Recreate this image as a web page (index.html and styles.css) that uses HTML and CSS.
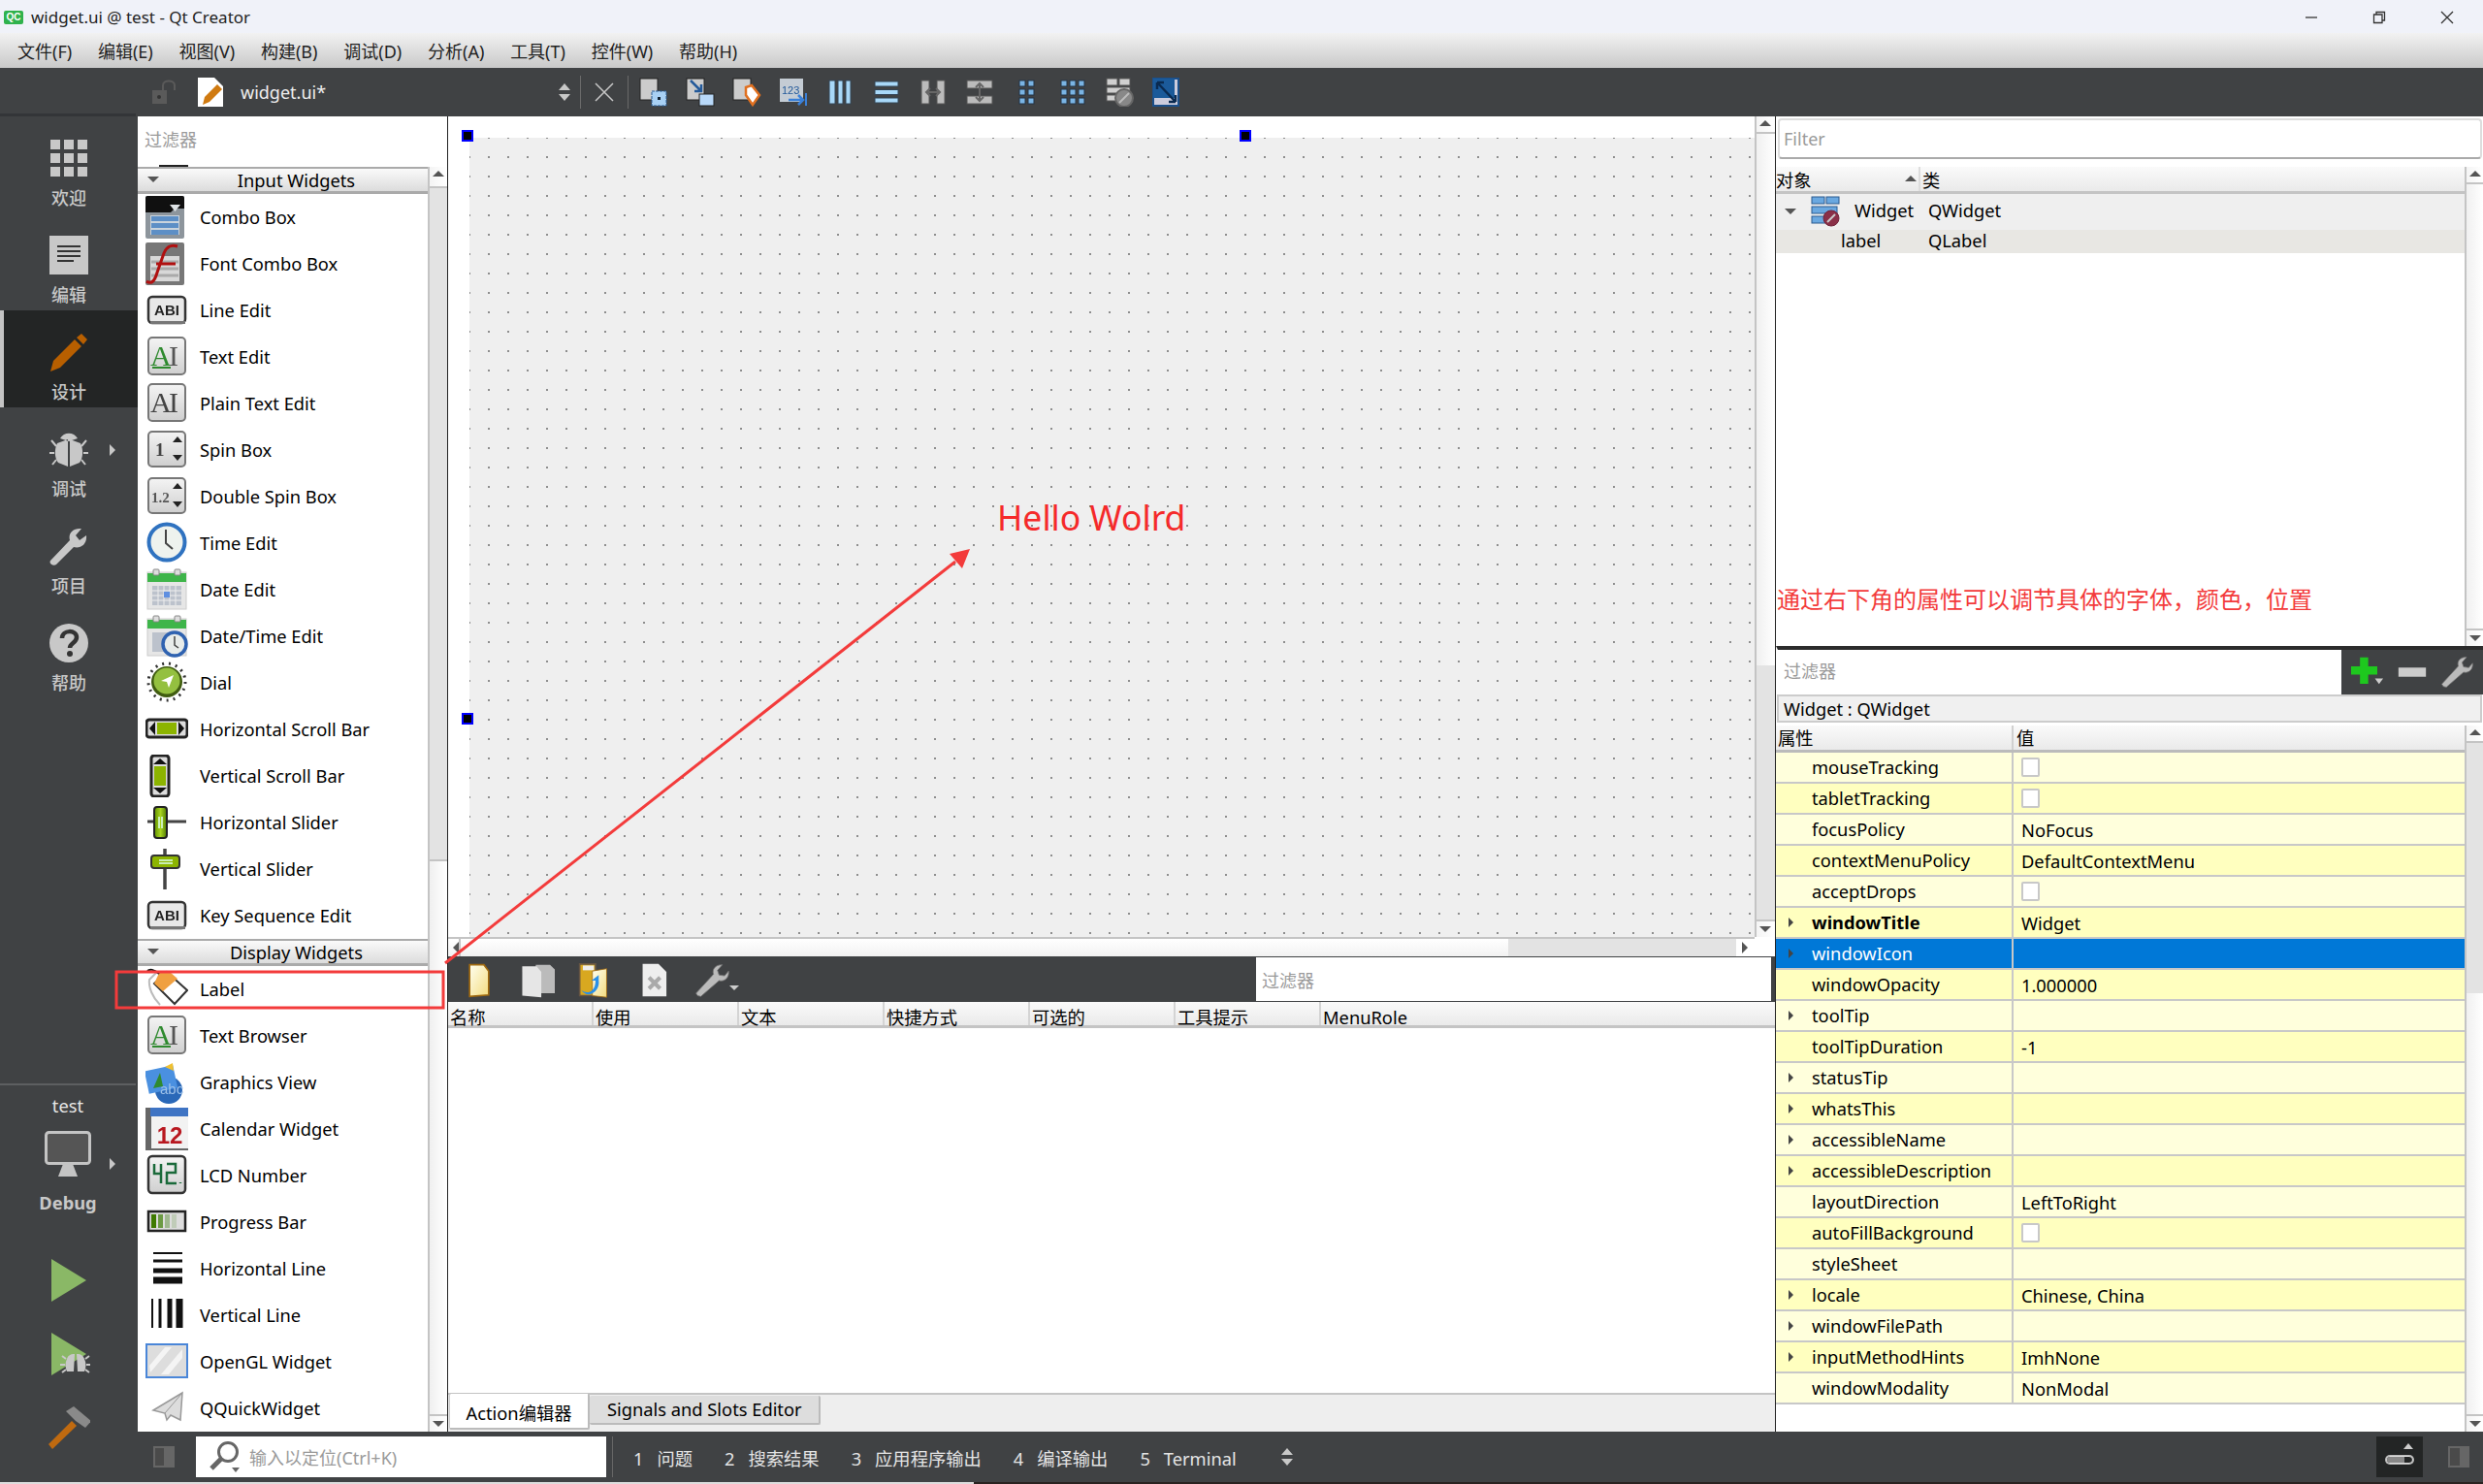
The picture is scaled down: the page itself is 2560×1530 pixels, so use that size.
FILE: index.html
```html
<!DOCTYPE html>
<html lang="zh">
<head>
<meta charset="utf-8">
<title>widget.ui @ test - Qt Creator</title>
<link rel="stylesheet" href="styles.css">
</head>
<body>
<svg class="defs" width="0" height="0">
  <defs>
    <linearGradient id="gbtn" x1="0" y1="0" x2="0" y2="1"><stop offset="0" stop-color="#fafafa"/><stop offset="1" stop-color="#c8c8c8"/></linearGradient>
    <linearGradient id="gcal" x1="0" y1="0" x2="0" y2="1"><stop offset="0" stop-color="#f4f4f4"/><stop offset="1" stop-color="#cfcfcf"/></linearGradient>
    <linearGradient id="ggreen" x1="0" y1="0" x2="1" y2="0"><stop offset="0" stop-color="#5f8f00"/><stop offset=".5" stop-color="#a8d420"/><stop offset="1" stop-color="#4f7a00"/></linearGradient>
    <linearGradient id="gdoc" x1="0" y1="0" x2="1" y2="1"><stop offset="0" stop-color="#fffff0"/><stop offset="1" stop-color="#f3dc80"/></linearGradient>
    <symbol id="i-combo" viewBox="0 0 44 44"><rect x="0" y="0" width="40" height="44" rx="2" fill="#8d959c"/><path d="M0 2q0-2 2-2h36q2 0 2 2v11l-10 0-4 4H0z" fill="#101010"/><path d="M25 9h11l-5.500 7z" fill="#dfe3e6"/><rect x="5" y="20" width="30" height="20" fill="#c9d3dc"/><rect x="6" y="21" width="28" height="5" fill="#5d8fc6"/><rect x="6" y="28" width="28" height="5" fill="#5d8fc6"/><rect x="6" y="35" width="28" height="5" fill="#5d8fc6"/></symbol>
    <symbol id="i-font" viewBox="0 0 44 44"><rect width="40" height="44" rx="2" fill="#777"/><rect x="5" y="14" width="30" height="26" fill="#d8d8d8"/><path d="M6 20h28M6 27h28M6 34h28" stroke="#aaa" stroke-width="3"/><path d="M1 40c6 4 9-2 11-9l7-20c3-7 7-9 14-7M11 22h20" fill="none" stroke="#b01010" stroke-width="3"/></symbol>
    <symbol id="i-line" viewBox="0 0 44 44"><rect x="3" y="8" width="38" height="27" rx="4" fill="#e8e8e8" stroke="#333" stroke-width="2.500"/><rect x="5" y="33" width="36" height="3" fill="#777"/><text x="22" y="27" text-anchor="middle" class="ic-bold" font-size="15">ABI</text></symbol>
    <symbol id="i-text" viewBox="0 0 44 44"><rect x="3" y="2" width="38" height="38" rx="4" fill="url(#gcal)" stroke="#777" stroke-width="2"/><text x="5" y="31" class="ic-serif" font-size="30" fill="#2f8a2f">A</text><text x="24" y="31" class="ic-serif" font-size="30" fill="#555">I</text><rect x="7" y="32" width="19" height="2" fill="#2f8a2f"/></symbol>
    <symbol id="i-plain" viewBox="0 0 44 44"><rect x="3" y="2" width="38" height="38" rx="4" fill="url(#gcal)" stroke="#777" stroke-width="2"/><text x="5" y="31" class="ic-serif" font-size="30" fill="#444">A</text><text x="24" y="31" class="ic-serif" font-size="30" fill="#444">I</text></symbol>
    <symbol id="i-spin" viewBox="0 0 44 44"><rect x="3" y="3" width="38" height="36" rx="4" fill="url(#gcal)" stroke="#777" stroke-width="2"/><text x="10" y="28" class="ic-serif" font-size="19" font-weight="700" fill="#444">1</text><path d="M28 14l5-6 5 6zM28 27l5 6 5-6z" fill="#222"/></symbol>
    <symbol id="i-dspin" viewBox="0 0 44 44"><rect x="3" y="3" width="38" height="36" rx="4" fill="url(#gcal)" stroke="#777" stroke-width="2"/><text x="6" y="28" class="ic-serif" font-size="15" font-weight="700" fill="#555">1.2</text><path d="M28 14l5-6 5 6zM28 27l5 6 5-6z" fill="#222"/></symbol>
    <symbol id="i-time" viewBox="0 0 44 44"><circle cx="22" cy="21" r="18.500" fill="#eef2ee" stroke="#2f72c0" stroke-width="4"/><path d="M21 8v14l7 6" fill="none" stroke="#444" stroke-width="2"/></symbol>
    <symbol id="i-date" viewBox="0 0 44 44"><rect x="2" y="4" width="40" height="38" fill="#e6e6e6" stroke="#ccc"/><rect x="2" y="5" width="40" height="9" fill="#3eb54a"/><rect x="8" y="1" width="6" height="6" rx="1" fill="#ddd" stroke="#888"/><rect x="30" y="1" width="6" height="6" rx="1" fill="#ddd" stroke="#888"/><rect x="7" y="18" width="30" height="20" fill="#bcc2cc"/><path d="M7 23h30M7 28h30M7 33h30M13 18v20M19 18v20M25 18v20M31 18v20" stroke="#eee"/><rect x="19" y="24" width="6" height="6" fill="#5f8fe0"/></symbol>
    <symbol id="i-datetime" viewBox="0 0 44 44"><rect x="2" y="4" width="40" height="38" fill="#e6e6e6" stroke="#ccc"/><rect x="2" y="5" width="40" height="9" fill="#3eb54a"/><rect x="8" y="1" width="6" height="6" rx="1" fill="#ddd" stroke="#888"/><rect x="30" y="1" width="6" height="6" rx="1" fill="#ddd" stroke="#888"/><rect x="7" y="18" width="20" height="20" fill="#bcc2cc"/><circle cx="30" cy="30" r="12" fill="#e8ecea" stroke="#2f62b0" stroke-width="3.500"/><path d="M30 22v9l4 3" fill="none" stroke="#444" stroke-width="1.500"/></symbol>
    <symbol id="i-dial" viewBox="0 0 44 44"><circle cx="22" cy="21" r="19" fill="none" stroke="#333" stroke-width="3" stroke-dasharray="2 5"/><circle cx="22" cy="21" r="16" fill="#405c10"/><circle cx="22" cy="20" r="13.500" fill="#94c040"/><path d="M16 20l13-6-5 13-2-6z" fill="#fff"/></symbol>
    <symbol id="i-hscroll" viewBox="0 0 44 44"><rect x="1" y="12" width="42" height="18" rx="3" fill="#ddd" stroke="#222" stroke-width="3"/><rect x="12" y="15" width="20" height="12" fill="#8cb400"/><path d="M10 14v14l-6-7zM34 14v14l6-7z" fill="#111"/></symbol>
    <symbol id="i-vscroll" viewBox="0 0 44 44"><rect x="6" y="1" width="18" height="42" rx="3" fill="#ddd" stroke="#222" stroke-width="3"/><rect x="9" y="12" width="12" height="20" fill="#8cb400"/><path d="M8 10h14l-7-6zM8 34h14l-7 6z" fill="#111"/></symbol>
    <symbol id="i-hslider" viewBox="0 0 44 44"><path d="M2 21h40" stroke="#444" stroke-width="3"/><rect x="9" y="6" width="13" height="32" rx="3" fill="url(#ggreen)" stroke="#222" stroke-width="2"/><path d="M14 16v12M17 16v12" stroke="#dfe" stroke-width="1.500"/></symbol>
    <symbol id="i-vslider" viewBox="0 0 44 44"><path d="M20 1v42" stroke="#444" stroke-width="3.500"/><rect x="6" y="8" width="29" height="13" rx="3" fill="#8cb400" stroke="#333" stroke-width="2"/><path d="M14 13h14M14 16h14" stroke="#dfe" stroke-width="1.500"/></symbol>
    <symbol id="i-label" viewBox="0 0 44 44"><path d="M12 4L4 12c-1 8 3 18 11 26" fill="none" stroke="#bbb" stroke-width="2"/><path d="M22 4l21 19-13 14L9 16z" fill="#fff" stroke="#333" stroke-width="2"/><path d="M15 3l10 1 8 7-15 13-9-8z" fill="#f0a040"/><path d="M2 3c2-2 7-2 12 3" fill="none" stroke="#111" stroke-width="2"/></symbol>
    <symbol id="i-gview" viewBox="0 0 44 44"><circle cx="24" cy="30" r="14" fill="#2a68b8"/><rect x="1" y="7" width="30" height="24" fill="#4a90e0" transform="rotate(-12 16 19)"/><path d="M8 28l7-16 3 14z" fill="#2f8a2f"/><path d="M20 6l8-4 1 8z" fill="#f0c030"/><text x="15" y="34" class="ic-sans" font-size="15" fill="#9cc0e8">abc</text></symbol>
    <symbol id="i-cal" viewBox="0 0 44 44"><rect x="0" y="0" width="44" height="44" fill="#666"/><rect x="5" y="0" width="39" height="9" fill="#3f74c4"/><rect x="6" y="9" width="38" height="33" fill="#f2f2f2"/><text x="25" y="37" text-anchor="middle" class="ic-bold red" font-size="24">12</text></symbol>
    <symbol id="i-lcd" viewBox="0 0 44 44"><rect x="3" y="2" width="38" height="38" rx="4" fill="url(#gcal)" stroke="#333" stroke-width="2.500"/><path d="M9 10v10h7M16 10v20M22 10h9v9h-9v11h10M36 29v1" fill="none" stroke="#1a6a3a" stroke-width="2.500"/></symbol>
    <symbol id="i-progress" viewBox="0 0 44 44"><rect x="3" y="11" width="38" height="20" fill="#ddd" stroke="#222" stroke-width="2.500"/><rect x="6" y="14" width="5" height="14" fill="#3e7a00"/><rect x="13" y="14" width="5" height="14" fill="#6c9a44"/><rect x="20" y="14" width="5" height="14" fill="#a0b890"/><rect x="27" y="14" width="5" height="14" fill="#c0ccb8"/></symbol>
    <symbol id="i-hline" viewBox="0 0 44 44"><path d="M8 6h30" stroke="#111" stroke-width="2"/><path d="M8 14h30" stroke="#111" stroke-width="3"/><path d="M8 24h30" stroke="#111" stroke-width="5"/><path d="M8 34h30" stroke="#111" stroke-width="7"/></symbol>
    <symbol id="i-vline" viewBox="0 0 44 44"><path d="M7 5v30" stroke="#111" stroke-width="2"/><path d="M15 5v30" stroke="#111" stroke-width="3"/><path d="M25 5v30" stroke="#111" stroke-width="5"/><path d="M35 5v30" stroke="#111" stroke-width="7"/></symbol>
    <symbol id="i-gl" viewBox="0 0 44 44"><rect x="1" y="4" width="42" height="34" fill="#ddd" stroke="#4a86d8" stroke-width="2"/><path d="M4 26L20 7h7L5 33zM16 35L38 9v9L24 35z" fill="#f4f4f4"/></symbol>
    <symbol id="i-quick" viewBox="0 0 44 44"><path d="M8 24L38 6l-2 28-10-5-4 5-2-7z" fill="#dcdcdc" stroke="#999" stroke-width="1.500"/><path d="M38 6L20 27" stroke="#999"/></symbol>
    <symbol id="t-place" viewBox="0 0 30 30"><rect x="1" y="1" width="18" height="22" fill="#ccc" stroke="#222"/><rect x="13" y="14" width="15" height="15" fill="#a8d0f4" stroke="#2a5a90" stroke-dasharray="3 1"/><rect x="19" y="20" width="3" height="3" fill="#123"/></symbol>
    <symbol id="t-buddy" viewBox="0 0 30 30"><rect x="1" y="1" width="18" height="22" fill="#ccc" stroke="#222"/><rect x="14" y="17" width="15" height="12" fill="#b8d8f8" stroke="#222"/><path d="M5 3l11 11M16 7v7h-7" fill="none" stroke="#245a9a" stroke-width="2.500"/></symbol>
    <symbol id="t-tag" viewBox="0 0 30 30"><rect x="1" y="1" width="18" height="22" fill="#ccc" stroke="#222"/><path d="M14 10l6-2 8 10-7 10-7-10z" fill="#fff" stroke="#e07020" stroke-width="2.500"/></symbol>
    <symbol id="t-tab" viewBox="0 0 30 30"><rect x="1" y="1" width="24" height="24" fill="#c4ccd4"/><text x="3" y="17" class="ic-sans blue" font-size="11">123</text><path d="M10 23h14M20 18l5 5-5 5" fill="none" stroke="#3a80d8" stroke-width="2.500"/><path d="M28 16v13" stroke="#3a80d8" stroke-width="2"/></symbol>
    <symbol id="t-h" viewBox="0 0 30 30"><rect x="4" y="3" width="6" height="24" fill="#a8d8f8" stroke="#345"/><rect x="13" y="3" width="5" height="24" fill="#a8d8f8" stroke="#345"/><rect x="21" y="3" width="5" height="24" fill="#a8d8f8" stroke="#345"/></symbol>
    <symbol id="t-v" viewBox="0 0 30 30"><rect x="3" y="4" width="24" height="5" fill="#a8d8f8" stroke="#345"/><rect x="3" y="12.500" width="24" height="5" fill="#a8d8f8" stroke="#345"/><rect x="3" y="21" width="24" height="5" fill="#a8d8f8" stroke="#345"/></symbol>
    <symbol id="t-sh" viewBox="0 0 30 30"><rect x="3" y="3" width="8" height="24" fill="#bbb" stroke="#555"/><rect x="19" y="3" width="8" height="24" fill="#bbb" stroke="#555"/><path d="M9 15h12M12 11l-4 4 4 4M18 11l4 4-4 4" fill="none" stroke="#666" stroke-width="2"/></symbol>
    <symbol id="t-sv" viewBox="0 0 30 30"><rect x="2" y="3" width="26" height="8" fill="#bbb" stroke="#555"/><rect x="2" y="19" width="26" height="8" fill="#bbb" stroke="#555"/><path d="M15 7v16M11 10l4-4 4 4M11 20l4 4 4-4" fill="none" stroke="#666" stroke-width="2"/></symbol>
    <symbol id="t-g2" viewBox="0 0 30 30"><g fill="#7ab4e4" stroke="#234"><rect x="8" y="3" width="6" height="6"/><rect x="17" y="3" width="6" height="6"/><rect x="8" y="12" width="6" height="6"/><rect x="17" y="12" width="6" height="6"/><rect x="8" y="21" width="6" height="6"/><rect x="17" y="21" width="6" height="6"/></g></symbol>
    <symbol id="t-g3" viewBox="0 0 30 30"><g fill="#7ab4e4" stroke="#234"><rect x="3" y="3" width="6" height="6"/><rect x="12" y="3" width="6" height="6"/><rect x="21" y="3" width="6" height="6"/><rect x="3" y="12" width="6" height="6"/><rect x="12" y="12" width="6" height="6"/><rect x="21" y="12" width="6" height="6"/><rect x="3" y="21" width="6" height="6"/><rect x="12" y="21" width="6" height="6"/><rect x="21" y="21" width="6" height="6"/></g></symbol>
    <symbol id="t-break" viewBox="0 0 30 30"><g fill="#d0d0d0" stroke="#555"><rect x="2" y="1" width="11" height="7"/><rect x="15" y="1" width="11" height="7"/><rect x="2" y="10" width="24" height="6"/><rect x="2" y="18" width="12" height="6"/></g><circle cx="20" cy="21" r="9" fill="#888" stroke="#666" stroke-width="2"/><path d="M15 26l10-10" stroke="#bbb" stroke-width="2"/></symbol>
    <symbol id="t-size" viewBox="0 0 30 30"><rect x="2" y="1" width="26" height="28" fill="#ccd" stroke="#1b4f8a" stroke-width="2"/><rect x="2" y="1" width="22" height="20" fill="#1b5a9a"/><path d="M6 5l19 20M6 5v7M6 5h7M25 25v-7M25 25h-7" fill="none" stroke="#0a2a50" stroke-width="2.500"/></symbol>
    <symbol id="wrench" viewBox="0 0 44 44"><path d="M4 41l-2-3 22-24c-2-6 2-12 11-12l-6 7 2 6 7 1 5-6c1 8-5 14-12 12L8 42z" fill="#bbb" stroke="#777"/></symbol>
    <symbol id="doc" viewBox="0 0 30 40"><path d="M2 2h17l9 9v27H2z" fill="#fff"/><path d="M19 2v9h9" fill="#ccc"/></symbol>
  </defs>
</svg>

<div class="app">
  <header class="titlebar">
    <span class="qc">QC</span>
    <span class="title">widget.ui @ test - Qt Creator</span>
    <div class="winbtns">
      <svg class="winbtn" viewBox="0 0 16 16"><path d="M2 8h12" stroke="#333" stroke-width="1.300"/></svg>
      <svg class="winbtn" viewBox="0 0 16 16"><path d="M2.500 5h8.500v8.500H2.500zM5 5V2.500h8.500V11H11" fill="none" stroke="#333" stroke-width="1.300"/></svg>
      <svg class="winbtn" viewBox="0 0 16 16"><path d="M2 2l12 12M14 2L2 14" stroke="#333" stroke-width="1.300"/></svg>
    </div>
  </header>
  <nav class="menubar">
    <span>文件(F)</span><span>编辑(E)</span><span>视图(V)</span><span>构建(B)</span><span>调试(D)</span><span>分析(A)</span><span>工具(T)</span><span>控件(W)</span><span>帮助(H)</span>
  </nav>

  <div class="main">
    <aside class="sidebar">
      <div class="side-top"></div>
      <div class="mode">
        <svg class="mode-ic" viewBox="0 0 40 40"><g fill="#c8c8c8"><rect x="1" y="1" width="10" height="10"/><rect x="15" y="1" width="10" height="10"/><rect x="29" y="1" width="10" height="10"/><rect x="1" y="15" width="10" height="10"/><rect x="15" y="15" width="10" height="10"/><rect x="29" y="15" width="10" height="10"/><rect x="1" y="29" width="10" height="10"/><rect x="15" y="29" width="10" height="10"/><rect x="29" y="29" width="10" height="10"/></g></svg>
        <span>欢迎</span>
      </div>
      <div class="mode">
        <svg class="mode-ic" viewBox="0 0 40 40"><rect width="40" height="40" x="0" y="0" fill="#c8c8c8"/><path d="M8 11h24M8 16h24M8 21h24M8 26h17" stroke="#333" stroke-width="2"/></svg>
        <span>编辑</span>
      </div>
      <div class="mode active">
        <svg class="mode-ic" viewBox="0 0 40 40"><path d="M1 40l3-11L26 7l7 7-22 22zM28 5l5-4 6 6-4 5z" fill="#b85f00"/></svg>
        <span>设计</span>
      </div>
      <div class="mode">
        <svg class="mode-ic" viewBox="0 0 40 40"><path d="M19 10L8 14c-3 6-3 15 1 20l10 4zM21 10l11 4c3 6 3 15-1 20l-10 4zM11 9c4-7 14-7 18 0l-9 3z" fill="#c8c8c8"/><path d="M7 17L2 11M5 24H0M7 31l-4 5M33 17l5-6M35 24h5M33 31l4 5" stroke="#c8c8c8" stroke-width="2"/></svg>
        <span>调试</span>
        <i class="tri-r"></i>
      </div>
      <div class="mode">
        <svg class="mode-ic" viewBox="0 0 40 40"><path d="M1 35L21 14c-2-7 3-13 12-12l-6 7 4 5 7-5c1 9-6 14-13 12L7 39c-3 2-8-1-6-4z" fill="#c8c8c8"/></svg>
        <span>项目</span>
      </div>
      <div class="mode">
        <svg class="mode-ic" viewBox="0 0 40 40"><circle cx="20" cy="20" r="20" fill="#c8c8c8"/><path d="M13 15c0-9 15-9 15-1 0 6-7 6-7 11" fill="none" stroke="#333" stroke-width="4.500"/><circle cx="21" cy="31" r="3" fill="#333"/></svg>
        <span>帮助</span>
      </div>
      <div class="side-bottom">
        <div class="kit">
          <span class="kit-name">test</span>
          <svg class="kit-ic" viewBox="0 0 48 48"><rect x="1.500" y="1.500" width="45" height="32" rx="3" fill="#555" stroke="#c4c4c4" stroke-width="3"/><path d="M19 34h10l5 13H14z" fill="#c4c4c4"/></svg>
          <span class="kit-cfg">Debug</span>
          <i class="tri-r kit-tri"></i>
        </div>
        <div class="act">
          <svg class="act-ic" viewBox="0 0 44 44"><path d="M4 0l36 22L4 44z" fill="#8ab866"/></svg>
        </div>
        <div class="act">
          <svg class="act-ic" viewBox="0 0 44 44"><path d="M4 0l36 22L4 44z" fill="#8ab866"/><path d="M28 22c-5 0-7 2-8 5-2 4-2 9 0 13h7zM30 22c5 0 7 2 8 5 2 4 2 9 0 13h-7z" fill="#c8c8c8"/><path d="M19 27l-4-3M18 33h-5M19 38l-4 3M39 27l4-3M40 33h4M39 38l4 3" stroke="#c8c8c8" stroke-width="2"/></svg>
        </div>
        <div class="act">
          <svg class="act-ic" viewBox="0 0 44 44"><path d="M1 39l24-24 5 5L5 44z" fill="#c06a10"/><path d="M19 5l8-5 18 15-6 7-10-7z" fill="#8a8a8a"/></svg>
        </div>
      </div>
    </aside>

    <div class="workspace">
      <div class="toolbar">
        <svg class="lock" viewBox="0 0 26 26"><rect x="1" y="11" width="15" height="14" fill="#5a5a5a"/><circle cx="8" cy="18" r="2" fill="#333"/><path d="M12 11V6c0-6 12-6 12 0v5" fill="none" stroke="#5a5a5a" stroke-width="2"/></svg>
        <svg class="docedit" viewBox="0 0 30 32"><path d="M1 1h17l9 9v21H1z" fill="#fff"/><path d="M6 29l2-8L21 8l5 5-13 13z" fill="#d07a10"/></svg>
        <span class="docname">widget.ui*</span>
        <span class="updown"><i class="up"></i><i class="down"></i></span>
        <span class="tsep first"></span>
        <svg class="tclose" viewBox="0 0 20 20"><path d="M1 1l18 18M19 1L1 19" stroke="#c8c8c8" stroke-width="1.500"/></svg>
        <span class="tsep"></span>
        <div class="tools">
          <svg><use href="#t-place"/></svg><svg><use href="#t-buddy"/></svg><svg><use href="#t-tag"/></svg><svg><use href="#t-tab"/></svg><svg><use href="#t-h"/></svg><svg><use href="#t-v"/></svg><svg><use href="#t-sh"/></svg><svg><use href="#t-sv"/></svg><svg><use href="#t-g2"/></svg><svg><use href="#t-g3"/></svg><svg><use href="#t-break"/></svg><svg><use href="#t-size"/></svg>
        </div>
      </div>

      <div class="panes">
        <section class="widgetbox">
          <div class="wb-filter"><span class="ph">过滤器</span><i class="wb-caret"></i></div>
          <div class="wb-body">
            <div class="wb-list">
              <div class="cat"><i class="tri-d"></i><span>Input Widgets</span></div>
              <div class="wi"><svg><use href="#i-combo"/></svg><span>Combo Box</span></div>
              <div class="wi"><svg><use href="#i-font"/></svg><span>Font Combo Box</span></div>
              <div class="wi"><svg><use href="#i-line"/></svg><span>Line Edit</span></div>
              <div class="wi"><svg><use href="#i-text"/></svg><span>Text Edit</span></div>
              <div class="wi"><svg><use href="#i-plain"/></svg><span>Plain Text Edit</span></div>
              <div class="wi"><svg><use href="#i-spin"/></svg><span>Spin Box</span></div>
              <div class="wi"><svg><use href="#i-dspin"/></svg><span>Double Spin Box</span></div>
              <div class="wi"><svg><use href="#i-time"/></svg><span>Time Edit</span></div>
              <div class="wi"><svg><use href="#i-date"/></svg><span>Date Edit</span></div>
              <div class="wi"><svg><use href="#i-datetime"/></svg><span>Date/Time Edit</span></div>
              <div class="wi"><svg><use href="#i-dial"/></svg><span>Dial</span></div>
              <div class="wi"><svg><use href="#i-hscroll"/></svg><span>Horizontal Scroll Bar</span></div>
              <div class="wi"><svg><use href="#i-vscroll"/></svg><span>Vertical Scroll Bar</span></div>
              <div class="wi"><svg><use href="#i-hslider"/></svg><span>Horizontal Slider</span></div>
              <div class="wi"><svg><use href="#i-vslider"/></svg><span>Vertical Slider</span></div>
              <div class="wi"><svg><use href="#i-line"/></svg><span>Key Sequence Edit</span></div>
              <div class="cat"><i class="tri-d"></i><span>Display Widgets</span></div>
              <div class="wi"><svg><use href="#i-label"/></svg><span>Label</span></div>
              <div class="wi"><svg><use href="#i-text"/></svg><span>Text Browser</span></div>
              <div class="wi"><svg><use href="#i-gview"/></svg><span>Graphics View</span></div>
              <div class="wi"><svg><use href="#i-cal"/></svg><span>Calendar Widget</span></div>
              <div class="wi"><svg><use href="#i-lcd"/></svg><span>LCD Number</span></div>
              <div class="wi"><svg><use href="#i-progress"/></svg><span>Progress Bar</span></div>
              <div class="wi"><svg><use href="#i-hline"/></svg><span>Horizontal Line</span></div>
              <div class="wi"><svg><use href="#i-vline"/></svg><span>Vertical Line</span></div>
              <div class="wi"><svg><use href="#i-gl"/></svg><span>OpenGL Widget</span></div>
              <div class="wi"><svg><use href="#i-quick"/></svg><span>QQuickWidget</span></div>
            </div>
            <div class="vbar wb-bar"><b class="sb-up"></b><b class="sb-thumb"></b><b class="sb-track"></b><b class="sb-down"></b></div>
          </div>
        </section>

        <section class="center">
          <div class="form-area">
            <div class="form-view">
              <div class="form-strip"></div>
              <div class="form-row">
                <div class="form-left"></div>
                <div class="form-canvas"><span class="hello">Hello Wolrd</span></div>
              </div>
              <i class="handle h1"></i><i class="handle h2"></i><i class="handle h3"></i>
            </div>
            <div class="vbar fv-bar"><b class="sb-up"></b><b class="sb-track"></b><b class="sb-thumb"></b><b class="sb-down"></b></div>
          </div>
          <div class="hbar"><b class="hb-left"></b><b class="hb-track"></b><b class="hb-thumb"></b><b class="hb-right"></b></div>
          <div class="act-tools">
            <svg class="at-ic" viewBox="0 0 44 44"><path d="M10 2h18l6 8v30l-24 2z" fill="url(#gdoc)" stroke="#a06a10" stroke-width="2"/></svg>
            <svg class="at-ic" viewBox="0 0 44 44"><path d="M20 2h18l6 6v30H20z" fill="#bbb"/><path d="M3 4h18l6 7v32l-24-2z" fill="#e6e6e6"/></svg>
            <svg class="at-ic" viewBox="0 0 44 44"><path d="M2 1h20v40H2z" fill="#d8a820" stroke="#654" stroke-width="2"/><rect x="6" y="3" width="14" height="6" fill="#eee"/><path d="M18 10l18-3v36l-18-2z" fill="url(#gdoc)" stroke="#a06a10"/><path d="M4 34c8 6 18 2 18-12h-5l9-7v7c2 14-14 24-22 12z" fill="#2a90e8"/></svg>
            <svg class="at-ic" viewBox="0 0 44 44"><path d="M8 1h20l10 10v31H8z" fill="#eee"/><path d="M16 18l14 14M30 18L16 32" stroke="#aaa" stroke-width="5"/></svg>
            <svg class="at-ic"><use href="#wrench"/></svg><i class="tri-small"></i>
            <div class="at-filter"><span class="ph">过滤器</span></div>
          </div>
          <div class="act-head">
            <span>名称</span><span>使用</span><span>文本</span><span>快捷方式</span><span>可选的</span><span>工具提示</span><span class="last">MenuRole</span>
          </div>
          <div class="act-body"></div>
          <div class="tabs">
            <span class="tab on">Action编辑器</span><span class="tab">Signals and Slots Editor</span>
          </div>
        </section>

        <section class="right">
          <div class="ob-filter"><span class="ph">Filter</span></div>
          <div class="ob">
            <div class="ob-main">
              <div class="ob-head"><span class="c1">对象<i class="sort"></i></span><span class="c2">类</span></div>
              <div class="ob-row top"><i class="tri-d small"></i><svg class="ob-ic" viewBox="0 0 32 32"><g fill="#6aa8e0" stroke="#2a5a90"><rect x="1" y="1" width="13" height="7"/><rect x="16" y="1" width="13" height="7"/><rect x="1" y="11" width="26" height="7"/><rect x="1" y="21" width="14" height="7"/></g><circle cx="21" cy="23" r="8" fill="#8a3048" stroke="#70243a"/><path d="M17 27l8-8" stroke="#ccc" stroke-width="2"/></svg><span class="n">Widget</span><span class="t">QWidget</span></div>
              <div class="ob-row child"><span class="n">label</span><span class="t">QLabel</span></div>
              <div class="ob-empty"><span class="note">通过右下角的属性可以调节具体的字体，颜色，位置</span></div>
            </div>
            <div class="vbar ob-bar"><b class="sb-up"></b><b class="sb-track white"></b><b class="sb-down"></b></div>
          </div>
          <div class="pe-top">
            <div class="pe-filter"><span class="ph">过滤器</span></div>
            <div class="pe-tools">
              <svg class="pe-ic" viewBox="0 0 36 36"><path d="M13 2h10v11h11v10H23v11H13V23H2V13h11z" fill="#1ec81e" transform="translate(-2 0) scale(.9)"/><path d="M26 25h9l-4.500 6z" fill="#ccc"/></svg>
              <svg class="pe-ic" viewBox="0 0 36 36"><rect x="3" y="13" width="30" height="10" fill="#ccc"/></svg>
              <svg class="pe-ic"><use href="#wrench"/></svg>
            </div>
          </div>
          <div class="pe-class">Widget : QWidget</div>
          <div class="pe">
            <div class="pe-main">
              <div class="pe-head"><span class="p1">属性</span><span class="p2">值</span></div>
              <div class="p lt"><span class="k">mouseTracking</span><span class="v"><i class="cb"></i></span></div>
              <div class="p dk"><span class="k">tabletTracking</span><span class="v"><i class="cb"></i></span></div>
              <div class="p lt"><span class="k">focusPolicy</span><span class="v">NoFocus</span></div>
              <div class="p dk"><span class="k">contextMenuPolicy</span><span class="v">DefaultContextMenu</span></div>
              <div class="p lt"><span class="k">acceptDrops</span><span class="v"><i class="cb"></i></span></div>
              <div class="p dk"><span class="k bold arrow">windowTitle</span><span class="v">Widget</span></div>
              <div class="p sel"><span class="k arrow">windowIcon</span><span class="v"></span></div>
              <div class="p dk"><span class="k">windowOpacity</span><span class="v">1.000000</span></div>
              <div class="p lt"><span class="k arrow">toolTip</span><span class="v"></span></div>
              <div class="p dk"><span class="k">toolTipDuration</span><span class="v">-1</span></div>
              <div class="p lt"><span class="k arrow">statusTip</span><span class="v"></span></div>
              <div class="p dk"><span class="k arrow">whatsThis</span><span class="v"></span></div>
              <div class="p lt"><span class="k arrow">accessibleName</span><span class="v"></span></div>
              <div class="p dk"><span class="k arrow">accessibleDescription</span><span class="v"></span></div>
              <div class="p lt"><span class="k">layoutDirection</span><span class="v">LeftToRight</span></div>
              <div class="p dk"><span class="k">autoFillBackground</span><span class="v"><i class="cb"></i></span></div>
              <div class="p lt"><span class="k">styleSheet</span><span class="v"></span></div>
              <div class="p dk"><span class="k arrow">locale</span><span class="v">Chinese, China</span></div>
              <div class="p lt"><span class="k arrow">windowFilePath</span><span class="v"></span></div>
              <div class="p dk"><span class="k arrow">inputMethodHints</span><span class="v">ImhNone</span></div>
              <div class="p lt"><span class="k">windowModality</span><span class="v">NonModal</span></div>
            </div>
            <div class="vbar pe-bar"><b class="sb-up"></b><b class="sb-thumb"></b><b class="sb-track white"></b><b class="sb-down"></b></div>
          </div>
        </section>
      </div>

      <footer class="statusbar">
        <svg class="sb-toggle" viewBox="0 0 22 22"><rect width="22" height="22" fill="#666"/><rect x="2" y="2" width="9" height="18" fill="#4a4a4a"/></svg>
        <div class="locator">
          <svg class="loc-ic" viewBox="0 0 34 34"><circle cx="20" cy="12" r="9.500" fill="none" stroke="#666" stroke-width="3"/><path d="M13 19L3 29" stroke="#666" stroke-width="5"/><path d="M24 28h8l-4 5z" fill="#666"/></svg>
          <span class="ph">输入以定位(Ctrl+K)</span>
        </div>
        <span class="st-sep"></span>
        <div class="outs">
          <span class="o"><em>1</em>问题</span><span class="o"><em>2</em>搜索结果</span><span class="o"><em>3</em>应用程序输出</span><span class="o"><em>4</em>编译输出</span><span class="o"><em>5</em>Terminal</span>
          <span class="updown out-ud"><i class="up"></i><i class="down"></i></span>
        </div>
        <div class="st-right">
          <div class="progress-btn"><i class="tri-u"></i><span class="pill"><b></b></span></div>
          <svg class="sb-toggle r" viewBox="0 0 22 22"><rect width="22" height="22" fill="#666"/><rect x="2" y="2" width="10" height="18" fill="#4a4a4a"/></svg>
        </div>
      </footer>
    </div>
  </div>
  <div class="wallpaper"></div>

  <svg class="annot" viewBox="0 0 2560 1530">
    <rect x="120" y="1002" width="337" height="37" fill="none" stroke="#f33b3b" stroke-width="3"/>
    <path d="M459 993L985 579" stroke="#f33b3b" stroke-width="3"/>
    <path d="M1000 566l-8 20-13-15z" fill="#f33b3b"/>
  </svg>
</div>
</body>
</html>
```
FILE: styles.css
```css
* { box-sizing: border-box; }
html, body { margin: 0; padding: 0; }
body { width: 2560px; height: 1530px; overflow: hidden; font: 18.300px/1.2 "Noto Sans", "Noto Sans CJK SC", sans-serif; color: #000; background: #333; }
.defs { position: absolute; }
i, b, em { font-style: normal; display: block; }
.ic-bold { font-family: "Liberation Sans", sans-serif; font-weight: 700; fill: #222; }
.ic-bold.red { fill: #b81820; }
.ic-serif { font-family: "Liberation Serif", serif; }
.ic-sans { font-family: "Liberation Sans", sans-serif; }
.ic-sans.blue { fill: #245a9a; }

.app { position: relative; width: 2560px; height: 1530px; display: flex; flex-direction: column; }

/* title + menu */
.titlebar { height: 34px; background: #f0f2f9; display: flex; align-items: center; padding: 2px 0 0 4px; flex: none; }
.qc { width: 20px; height: 14px; background: #2fb24c; color: #fff; font: 700 10px/14px "Liberation Sans", sans-serif; text-align: center; border-radius: 2px; }
.title { margin-left: 8px; font-size: 17px; color: #222; }
.winbtns { margin-left: auto; display: flex; gap: 54px; padding-right: 29px; }
.winbtn { width: 16px; height: 16px; display: block; }
.menubar { height: 36px; flex: none; background: linear-gradient(#f2f2f2, #c9c9c9); display: flex; align-items: center; padding: 3px 0 0 18px; gap: 26.800px; font-size: 18px; color: #222; }

/* main */
.main { height: 1458px; flex: none; display: flex; background: #404244; }
.wallpaper { height: 2px; flex: none; background: linear-gradient(90deg, #ddd 0 1004px, #2a2320 1004px); }

/* sidebar */
.sidebar { width: 142px; flex: none; display: flex; flex-direction: column; color: #c8c8c8; }
.side-top { height: 50px; border-bottom: 3px solid #333538; margin-right: 2px; flex: none; }
.mode { height: 100px; flex: none; position: relative; display: flex; flex-direction: column; align-items: center; padding-top: 23px; font-size: 18px; font-weight: 500; }
.mode span { margin-top: 8px; line-height: 26px; }
.mode-ic { width: 40px; height: 40px; display: block; }
.mode.active { background: #232525; border-left: 4px solid #c4c4c4; padding-right: 4px; }
.tri-r { position: absolute; left: 113px; top: 38px; width: 0; height: 0; border-left: 6px solid #c8c8c8; border-top: 6px solid transparent; border-bottom: 6px solid transparent; }
.side-bottom { margin-top: auto; flex: none; }
.kit { height: 165px; border-top: 2px solid #5d5f61; margin-right: 2px; position: relative; display: flex; flex-direction: column; align-items: center; padding-top: 9px; }
.kit-name { color: #e6e6e6; line-height: 24px; }
.kit-ic { width: 48px; height: 48px; margin-top: 14px; }
.kit-cfg { color: #c8c8c8; font-weight: 700; margin-top: 14px; line-height: 24px; }
.kit-tri { top: 75px; }
.act { height: 76px; display: flex; align-items: center; justify-content: center; }
.act-ic { width: 44px; height: 44px; }
.side-bottom .act:last-child { height: 94px; padding-bottom: 18px; }

/* workspace */
.workspace { flex: 1; min-width: 0; display: flex; flex-direction: column; }
.toolbar { height: 50px; flex: none; display: flex; align-items: center; padding-left: 14px; color: #eee; }
.lock { width: 26px; height: 26px; }
.docedit { width: 30px; height: 32px; margin-left: 21px; }
.docname { margin-left: 15px; width: 328px; font-size: 18px; padding-top: 2px; }
.updown { display: flex; flex-direction: column; gap: 4px; width: 14px; }
.updown .up { border-bottom: 7px solid #c8c8c8; border-left: 6px solid transparent; border-right: 6px solid transparent; width: 0; }
.updown .down { border-top: 7px solid #c8c8c8; border-left: 6px solid transparent; border-right: 6px solid transparent; width: 0; }
.tsep { width: 1px; height: 34px; background: #6a6a6a; }
.tsep.first { margin-left: 8px; }
.tclose { width: 20px; height: 20px; margin: 0 14px; }
.tools { display: flex; gap: 18px; margin-left: 11px; }
.tools svg { width: 30px; height: 30px; display: block; filter: blur(.4px); }

.panes { height: 1356px; flex: none; display: flex; background: #222; }

/* widget box */
.widgetbox { width: 320px; flex: none; display: flex; flex-direction: column; background: #fff; padding-top: 2px; border-right: 1px solid #222; }
.wb-filter { height: 50px; margin: 0 2px; background: #fff; display: flex; align-items: center; padding: 0 5px 4px; flex: none; position: relative; }
.wb-caret { position: absolute; left: 20px; bottom: 0; width: 30px; height: 2px; background: #222; }
.ph { color: #9a9a9a; font-size: 18px; }
.wb-body { flex: 1; min-height: 0; display: flex; }
.wb-list { flex: 1; min-width: 0; }
.cat { height: 28px; position: relative; background: linear-gradient(#fafafa, #dcdcdc); border-top: 2px solid #aaa; border-bottom: 3px solid #aaa; text-align: center; line-height: 23px; padding-left: 28px; }
.tri-d { position: absolute; left: 10px; top: 8px; width: 0; height: 0; border-top: 6px solid #555; border-left: 6px solid transparent; border-right: 6px solid transparent; }
.wi { height: 48px; display: flex; align-items: center; padding-left: 8px; }
.wi svg { width: 44px; height: 44px; flex: none; filter: blur(.4px); }
.wi span { margin-left: 12px; }
.vbar { flex: none; display: flex; flex-direction: column; border-left: 2px solid #c4c4c4; }
.vbar b { display: block; flex: none; }
.sb-up, .sb-down { height: 18px; position: relative; background: linear-gradient(90deg, #f4f4f4, #fff); }
.sb-up { border-bottom: 2px solid #c4c4c4; }
.sb-down { border-top: 2px solid #c4c4c4; margin-top: auto; }
.sb-up::after, .sb-down::after { content: ""; position: absolute; left: 3px; width: 0; height: 0; border-left: 6px solid transparent; border-right: 6px solid transparent; }
.sb-up::after { top: 4px; border-bottom: 6px solid #555; }
.sb-down::after { top: 5px; border-top: 6px solid #555; }
.sb-thumb { background: #e3e3e3; }
.sb-track { background: linear-gradient(90deg, #f0f0f0, #fff); flex: 1 !important; }
.wb-bar { width: 20px; }
.wb-bar .sb-up { height: 22px; }
.wb-bar .sb-thumb { height: 694px; border-bottom: 2px solid #c4c4c4; }

/* center */
.center { width: 1369px; flex: none; display: flex; flex-direction: column; background: #fff; border-right: 1px solid #222; }
.form-area { height: 846px; flex: none; display: flex; }
.form-view { flex: 1; min-width: 0; position: relative; display: flex; flex-direction: column; background: #fff; }
.form-strip { height: 22px; flex: none; }
.form-row { flex: 1; display: flex; min-height: 0; }
.form-left { width: 22px; flex: none; }
.form-canvas { flex: 1; position: relative; background-color: #efefef; background-image: radial-gradient(circle at 1px 1px, #8e8e8e 1.200px, transparent 1.400px); background-size: 20px 20px; background-position: -1px -1px; }
.hello { position: absolute; left: 544px; top: 368px; font-size: 35.600px; line-height: 46px; color: #f52a2a; white-space: nowrap; }
.handle { position: absolute; width: 12px; height: 12px; background: #000; border: 2px solid #00f; }
.h1 { left: 14px; top: 14px; } .h2 { left: 816px; top: 14px; } .h3 { left: 14px; top: 615px; }
.fv-bar { width: 21px; }
.fv-bar .sb-thumb { height: 262px; }
.hbar { height: 20px; flex: none; display: flex; border-top: 2px solid #c4c4c4; margin-right: 21px; background: linear-gradient(#fff, #f2f2f2); }
.hb-left { width: 13px; position: relative; border-right: 2px solid #c4c4c4; }
.hb-left::after { content: ""; position: absolute; left: 5px; top: 3px; border-right: 6px solid #555; border-top: 6px solid transparent; border-bottom: 6px solid transparent; }
.hb-track { width: 1080px; }
.hb-thumb { width: 235px; background: #e3e3e3; }
.hb-right { flex: 1; position: relative; background: #fff; }
.hb-right::after { content: ""; position: absolute; left: 6px; top: 3px; border-left: 6px solid #555; border-top: 6px solid transparent; border-bottom: 6px solid transparent; }
.act-tools { height: 47px; flex: none; background: #404244; display: flex; align-items: center; padding: 3px 0 0 14px; position: relative; gap: 24px; }
.at-ic { width: 36px; height: 38px; display: block; flex: none; filter: blur(.4px); }
.tri-small { position: absolute; left: 290px; top: 30px; border-top: 5px solid #ccc; border-left: 5px solid transparent; border-right: 5px solid transparent; }
.at-filter { position: absolute; left: 833px; top: 1px; right: 4px; height: 45px; background: #fff; display: flex; align-items: center; padding: 4px 0 0 6px; }
.act-head { height: 27px; flex: none; display: flex; background: linear-gradient(#fafafa, #eaeaea); border-bottom: 3px solid #c4c4c4; line-height: 31px; }
.act-head span { width: 150px; padding-left: 2px; border-right: 2px solid #d4d4d4; flex: none; }
.act-head .last { width: auto; flex: 1; border: 0; }
.act-body { flex: 1; min-height: 0; background: #fff; }
.tabs { height: 40px; flex: none; background: #eee; border-top: 2px solid #c4c4c4; display: flex; align-items: flex-start; padding-left: 1px; }
.tab { height: 30px; padding: 0 18px; margin-top: 1px; background: #ddd; border-radius: 2px; border-bottom: 2px solid #bbb; border-right: 2px solid #bbb; line-height: 28px; width: 238px; text-align: center; flex: none; white-space: nowrap; }
.tab.on { background: #fff; width: 145px; padding: 0; height: 37px; margin-top: -1px; line-height: 40px; border-left: 1px solid #ccc; }

/* right */
.right { flex: 1; min-width: 0; display: flex; flex-direction: column; background: #fff; padding-top: 2px; }
.ob-filter { height: 42px; margin: 0 1px 0 2px; border: 2px solid #ddd; border-bottom-color: #aaa; border-radius: 4px; background: #fff; display: flex; align-items: center; padding: 2px 0 0 4px; flex: none; }
.ob { height: 494px; flex: none; display: flex; margin-top: 8px; background: #fff; }
.ob-main { flex: 1; min-width: 0; display: flex; flex-direction: column; }
.ob-head { height: 28px; flex: none; display: flex; background: linear-gradient(#fafafa, #eaeaea); border-bottom: 3px solid #c4c4c4; line-height: 28px; }
.c1 { width: 149px; border-right: 2px solid #ddd; position: relative; }
.sort { position: absolute; right: 2px; top: 9px; border-bottom: 6px solid #555; border-left: 6px solid transparent; border-right: 6px solid transparent; }
.c2 { padding-left: 2px; }
.ob-row { display: flex; align-items: center; position: relative; padding-bottom: 3px; }
.ob-row.top { height: 37px; background: #efefef; }
.ob-row.child { height: 24px; background: #e8e7e3; }
.ob-row .tri-d.small { left: 9px; top: 15px; }
.ob-ic { width: 32px; height: 32px; position: absolute; left: 36px; top: 2px; filter: blur(.4px); }
.ob-row .n { position: absolute; left: 81px; }
.ob-row.child .n { left: 67px; }
.ob-row .t { position: absolute; left: 157px; }
.ob-empty { flex: 1; position: relative; }
.note { position: absolute; left: 1px; top: 342px; font-size: 24px; line-height: 30px; color: #f33b3b; white-space: nowrap; }
.ob-bar { width: 19px; }
.pe-top { height: 50px; flex: none; display: flex; border-top: 4px solid #2c2c2c; border-left: 2px solid #fff; }
.pe-filter { width: 581px; flex: none; display: flex; align-items: center; padding: 0 0 0 6px; }
.pe-tools { flex: 1; background: #404244; display: flex; align-items: center; justify-content: space-around; padding: 0 4px; }
.pe-ic { width: 34px; height: 36px; display: block; filter: blur(.4px); }
.pe-class { height: 29px; flex: none; margin: 0 1px; background: #f0f0f0; border: 2px solid #ccc; padding-left: 5px; line-height: 26px; }
.pe { flex: 1; min-height: 0; display: flex; padding-top: 3px; background: #fff; }
.pe-main { flex: 1; min-width: 0; }
.pe-head { height: 28px; display: flex; background: linear-gradient(#fafafa, #eaeaea); border-bottom: 3px solid #bbb; line-height: 26px; }
.p1 { width: 245px; padding-left: 2px; border-right: 2px solid #d0d0d0; flex: none; }
.p2 { padding-left: 3px; }
.p { height: 32px; display: flex; border-bottom: 2px solid #c8c8c8; line-height: 29px; }
.p.lt { background: #ffffdc; }
.p.dk { background: #ffffbf; }
.p.sel { background: #0078d7; color: #fff; }
.k { width: 245px; padding-left: 37px; border-right: 2px solid #c8c8c8; flex: none; position: relative; white-space: nowrap; }
.k.bold { font-weight: 700; }
.k.arrow::before { content: ""; position: absolute; left: 13px; top: 10px; border-left: 5px solid #444; border-top: 5px solid transparent; border-bottom: 5px solid transparent; }
.v { flex: 1; padding-left: 8px; display: flex; align-items: center; }
.cb { width: 19px; height: 20px; background: #fff; border: 2px solid #c8c8c8; border-radius: 2px; }
.pe-bar { width: 19px; }
.pe-bar .sb-thumb { height: 258px; }

/* status */
.statusbar { height: 52px; flex: none; display: flex; align-items: center; color: #e4e4e4; }
.sb-toggle { width: 22px; height: 22px; margin-left: 16px; flex: none; }
.locator { width: 423px; height: 42px; margin-left: 22px; background: #fff; display: flex; align-items: center; padding-left: 13px; flex: none; }
.loc-ic { width: 34px; height: 34px; }
.locator .ph { margin-left: 8px; padding-top: 3px; }
.st-sep { width: 1px; height: 42px; background: #666; margin-left: 6px; flex: none; }
.outs { display: flex; align-items: center; margin-left: 21px; padding-top: 3px; }
.o { display: flex; margin-right: 33px; white-space: nowrap; }
.o em { margin-right: 14px; }
.out-ud { margin-left: 13px; margin-top: -2px; }
.st-right { margin-left: auto; display: flex; align-items: center; padding-right: 14px; }
.progress-btn { width: 48px; height: 42px; background: #232525; position: relative; }
.tri-u { position: absolute; left: 28px; top: 7px; border-bottom: 6px solid #ccc; border-left: 5px solid transparent; border-right: 5px solid transparent; }
.pill { position: absolute; left: 10px; top: 20px; width: 28px; height: 8px; background: #232525; border: 1px solid #ddd; border-radius: 4px; overflow: hidden; display: block; box-shadow: 0 0 0 1px #bbb; }
.pill b { width: 18px; height: 8px; background: #888; }
.sb-toggle.r { margin-left: 26px; }

.annot { position: absolute; left: 0; top: 0; width: 2560px; height: 1530px; pointer-events: none; }
```
